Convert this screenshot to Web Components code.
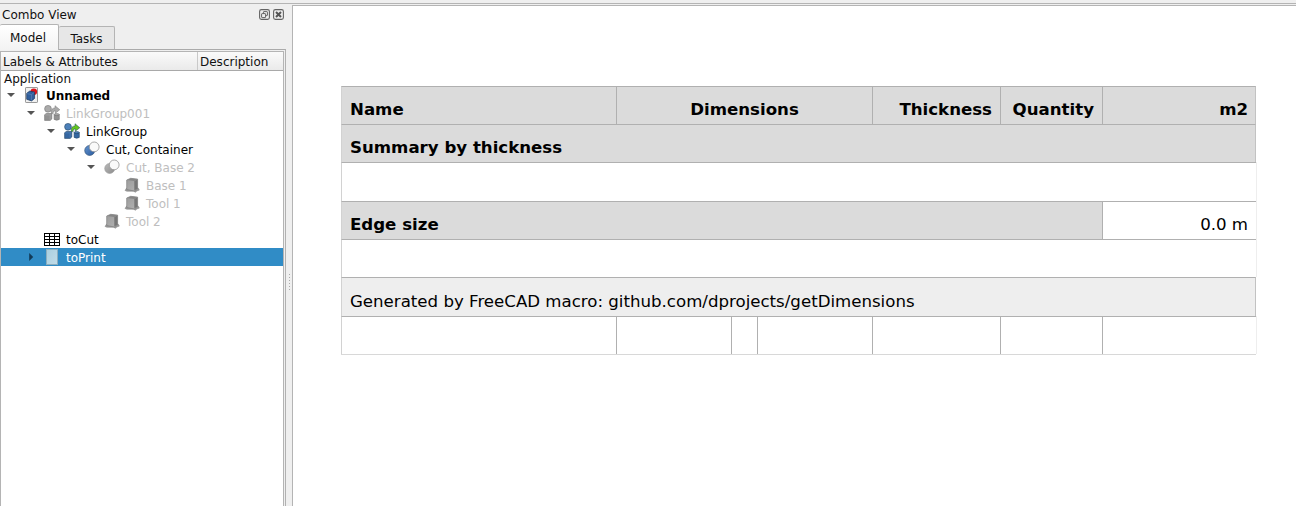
<!DOCTYPE html>
<html lang="en"><head><meta charset="utf-8"><title>Combo View</title>
<style>html,body{margin:0;height:506px;overflow:hidden;background:#efefef}</style></head>
<body><cad-window></cad-window>
<script>
const define = (name, html, setup) => customElements.define(name, class extends HTMLElement {
  constructor() {
    super();
    this.attachShadow({mode: 'open'});
  }
  connectedCallback() {
    this.shadowRoot.innerHTML = html;
    if (setup) setup(this, this.shadowRoot);
  }
});

const cubeGroup = (a, b, arrow, edge) => `
  <circle cx="4" cy="3.8" r="3.4" fill="${a}" stroke="${edge}" stroke-width=".6"/>
  <path d="M.6 9.8l1.6-1.3h5.6v5.4l-1.6 1.5H.6z" fill="${b}" stroke="${edge}" stroke-width=".6"/>
  <path d="M.9 9.9h5.2v5M6.1 9.9l1.5-1.1" fill="none" stroke="${a}" stroke-width=".7"/>
  <path d="M10.1 9.6v4.8q2.6 1.6 5.2 0V9.6z" fill="${b}" stroke="${edge}" stroke-width=".6"/>
  <ellipse cx="12.7" cy="9.6" rx="2.6" ry="1" fill="${a}" stroke="${edge}" stroke-width=".6"/>
  <path d="M7.3 8.6C6.8 4.8 8.3 3 11 2.9V.7l4.8 4L11.3 8.3V5.9C9.7 5.8 9 6.6 9.2 8.6z" fill="${arrow}" stroke="${edge}" stroke-width=".5"/>`;
const cut = (id, a, b, e) => `
  <defs><linearGradient id="${id}" x2="1" y2="1"><stop stop-color="${a}"/><stop offset="1" stop-color="${b}"/></linearGradient></defs>
  <circle cx="5.7" cy="9.5" r="5" fill="url(#${id})" stroke="${e}" stroke-width=".6"/>
  <circle cx="10.2" cy="5.9" r="4.9" fill="#fafafa" stroke="#959595" stroke-width=".8"/>`;
const icons = {
  doc: `<rect x="1.5" y=".5" width="12" height="15" rx=".6" fill="#f0f0f0" stroke="#999"/>
    <circle cx="9.8" cy="4.8" r="3.3" fill="#dc151c"/>
    <path d="M2.7 6.3l3-2.2 4.9 1v6.3L7.6 13.9l-4.9-1.6z" fill="#315f9d" stroke="#18375f" stroke-width=".7"/>
    <path d="M3 6.6l4.5 1v5.7M7.5 7.6l2.8-2.2" fill="none" stroke="#6089bd" stroke-width=".6"/>`,
  groupOff: cubeGroup('#aaa', '#929292', '#aaa', '#747474'),
  group: cubeGroup('#4c80b9', '#3567a2', '#63c51d', '#214466'),
  cut: cut('c', '#6795cf', '#285a9d', '#25466f'),
  cutOff: cut('g', '#bbb', '#8b8b8b', '#999'),
  box: `<defs><linearGradient id="b" x2=".7" y2="1"><stop stop-color="#9b9b9b"/><stop offset="1" stop-color="#b0b0b0"/></linearGradient></defs>
    <path d="M1 13.4L2.7 11h11.4l1.2 2.1-2.4.8-1.4 1.3-2-1H2.8z" fill="#9a9a9a" stroke="#8a8a8a" stroke-width=".6"/>
    <path d="M2.7 3l4-1.7 6.9.8v9.9l-3.2 2-7.7-1.5z" fill="url(#b)" stroke="#808080" stroke-width=".7"/>
    <path d="M3 3.1l7.3.8 3.1-1.6-6.7-.7z" fill="#858585"/><path d="M10.3 4v9.6l3.1-1.9V2.6z" fill="#777"/>`,
  sheet: `<path d="M0 2h16v13H0z" fill="#fff"/><path d="M0 2.5h16M0 5.5h16M0 8.5h16M0 11.5h16M0 14.5h16M.5 2v13M5.5 2v13M10.5 2v13M15.5 2v13" stroke="#000" fill="none"/>`,
  page: `<defs><linearGradient id="p" x2="1" y2="1"><stop stop-color="#a9cfe0"/><stop offset="1" stop-color="#c1dce8"/></linearGradient></defs>
    <rect x="2.5" y=".5" width="11" height="15" fill="url(#p)" stroke="#8caebe"/>`,
  float: `<rect x=".6" y=".6" width="9.8" height="9.8" rx="1.8" fill="none" stroke="#636363" stroke-width="1.1"/><rect x="4.4" y="2.6" width="4" height="4" rx=".5" fill="none" stroke="#636363"/><rect x="2.6" y="4.6" width="4" height="4" rx=".5" fill="#efefef" stroke="#636363"/>`,
  close: `<rect x=".6" y=".6" width="9.8" height="9.8" rx="1.8" fill="none" stroke="#636363" stroke-width="1.1"/><path d="M3 3l5 5M8 3L3 8" stroke="#555" stroke-width="2"/>`
};

define('cad-icon', `<style>:host{display:block;flex:none}svg{display:block}</style>`, (el, root) => {
  const n = +(el.getAttribute('size') || 16);
  root.innerHTML += `<svg width="${n}" height="${n}" viewBox="0 0 ${n} ${n}">${icons[el.getAttribute('name')]}</svg>`;
});

define('tree-row', `<style>
  :host{display:flex;align-items:center;height:18px;color:#000;white-space:pre;box-sizing:border-box;padding-left:calc(var(--depth)*20px + 5px)}
  :host([off]){color:#bebebe}:host([bold]){font-weight:bold}
  :host([selected]){background:#308cc6;color:#fff}
  .arrow{width:10px;height:10px;margin-right:8px;flex:none}
  .label{padding-top:2px}
  cad-icon{margin-right:6px}
</style>`, (el, root) => {
  el.style.setProperty('--depth', el.getAttribute('depth'));
  const state = el.getAttribute('state');
  const arrow = state === 'open' ? '<path d="M1 3h8L5 7z" fill="#555"/>' : state === 'closed' ? '<path d="M3.2 1v8l4-4z" fill="#123a56"/>' : '';
  root.innerHTML += `<svg class="arrow" viewBox="0 0 10 10">${arrow}</svg><cad-icon name="${el.getAttribute('icon')}"></cad-icon><span class="label"><slot></slot></span>`;
});

define('model-tree', `<style>
  :host{display:block;height:455px;width:282px;border:1px solid #b4b4b4;border-bottom:0;background:#fff;overflow:hidden}
  header{display:flex;height:18px;border-bottom:1px solid #a9a9a9;background:linear-gradient(#fafafa,#eaeaea);line-height:20px}
  header span{box-sizing:border-box;padding-left:2px}header span:first-child{width:197px;border-right:1px solid #c9c9c9}
  .app{height:15px;line-height:16px;padding-left:3px}
</style><header><span>Labels &amp; Attributes</span><span>Description</span></header>
<div class="app">Application</div>
<tree-row depth="0" state="open" icon="doc" bold>Unnamed</tree-row>
<tree-row depth="1" state="open" icon="groupOff" off>LinkGroup001</tree-row>
<tree-row depth="2" state="open" icon="group">LinkGroup</tree-row>
<tree-row depth="3" state="open" icon="cut">Cut, Container</tree-row>
<tree-row depth="4" state="open" icon="cutOff" off>Cut, Base 2</tree-row>
<tree-row depth="5" icon="box" off>Base 1</tree-row>
<tree-row depth="5" icon="box" off>Tool 1</tree-row>
<tree-row depth="4" icon="box" off>Tool 2</tree-row>
<tree-row depth="1" icon="sheet">toCut</tree-row>
<tree-row depth="1" state="closed" icon="page" selected>toPrint</tree-row>`);

define('combo-view', `<style>
  :host{display:flex;flex-direction:column;width:286px;height:502px;box-sizing:border-box;font:12px "DejaVu Sans",sans-serif;color:#111}
  .title{display:flex;height:21px;flex:none;align-items:center;padding-left:2px;box-sizing:border-box}
  .title span{flex:1}.title cad-icon{margin-right:3px}.title cad-icon:last-child{margin-right:2px}
  .tabs{display:flex;height:24px;align-items:flex-end;flex:none}
  .tab{box-sizing:border-box;display:flex;align-items:center;justify-content:center;border:1px solid #b4b4b4;border-radius:2px 2px 0 0}
  .on{position:relative;width:59px;height:26px;border-left:0;border-bottom:0;background:linear-gradient(#fff,#f3f3f3);padding-right:2px;padding-top:1px;margin-bottom:-1px}
  .off{width:56px;height:23px;border-left:0;border-bottom:0;background:#e7e7e7;padding-top:2px}
  .pane{flex:none;height:457px;border-top:1px solid #aaa;padding-top:1px;width:286px;border-right:1px solid #b1b1b1;box-sizing:border-box}
</style><div class="title"><span>Combo View</span><cad-icon name="float" size="11"></cad-icon><cad-icon name="close" size="11"></cad-icon></div>
<div class="tabs"><div class="tab on">Model</div><div class="tab off">Tasks</div></div>
<div class="pane"><model-tree></model-tree></div>`);

define('report-cell', `<style>
  :host{display:flex;align-items:center;box-sizing:border-box;border-left:1px solid #b0b0b0;border-top:1px solid #b0b0b0;padding:7px 8px 0;white-space:pre}
  :host([span]){grid-column:span var(--span)}
  :host([head]){background:#dbdbdb;font-weight:bold}:host([note]){background:#eee;padding-top:8px}
  :host([align=center]){justify-content:center}:host([align=right]){justify-content:flex-end}
  :host([edge]){border-left-color:#d2d2d2}:host([last]){box-shadow:1px 0 #eee}
  :host([last][head]),:host([last][note]){border-right:1px solid #c2c2c2;box-shadow:none;padding-right:7px}
</style><slot></slot>`, el => el.style.setProperty('--span', el.getAttribute('span') || 1));

define('report-table', `<style>
  :host{display:grid;width:915px;grid-template-columns:275px 115px 26px 115px 128px 102px 154px;grid-template-rows:38px 38px 39px 38px 38px 39px 38px;border-bottom:1px solid #d8d8d8;font:16.62px "DejaVu Sans",sans-serif;color:#000}
</style>
<report-cell head edge>Name</report-cell><report-cell head span="3" align="center">Dimensions</report-cell><report-cell head align="right">Thickness</report-cell><report-cell head align="right">Quantity</report-cell><report-cell head last align="right">m2</report-cell>
<report-cell head edge last span="7">Summary by thickness</report-cell>
<report-cell edge last span="7"></report-cell>
<report-cell head edge span="6">Edge size</report-cell><report-cell last align="right">0.0 m</report-cell>
<report-cell edge last span="7"></report-cell>
<report-cell note edge last span="7">Generated by FreeCAD macro: github.com/dprojects/getDimensions</report-cell>
<report-cell edge></report-cell><report-cell></report-cell><report-cell></report-cell><report-cell></report-cell><report-cell></report-cell><report-cell></report-cell><report-cell last></report-cell>`);

define('cad-window', `<style>
  :host{display:block;height:506px;background:#efefef;overflow:hidden}
  .top{height:3px;border-bottom:1px solid #b4b4b4}
  .body{display:flex;height:502px}
  .split{width:6px;display:flex;align-items:center;justify-content:flex-end;padding:56px 1px 0 0;box-sizing:border-box}
  main{flex:1;margin-top:1px;border:solid #b4b4b4;border-width:1px 0 0 1px;background:#fff;box-sizing:border-box;padding:80px 0 0 48px}
</style><div class="top"></div><div class="body"><combo-view></combo-view>
<div class="split"><svg width="3" height="18"><path d="M1.5 0v18" stroke="#aaa" stroke-dasharray="1 2"/></svg></div>
<main><report-table></report-table></main></div>`);
</script></body></html>
